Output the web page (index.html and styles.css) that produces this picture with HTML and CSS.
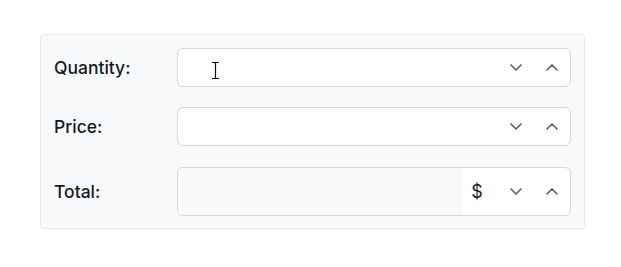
FILE: index.html
```html
<!DOCTYPE html>
<html lang="en">
<head>
    <meta charset="UTF-8">
    <meta name="viewport" content="width=device-width, initial-scale=1.0">
    <title>Order Total</title>
    <link rel="stylesheet" href="styles.css">
</head>
<body>

    <div class="panel">
        <div class="row">
            <label for="quantity">Quantity:</label>
            <div class="field">
                <input type="text" id="quantity">
                <button type="button" class="spin"><svg viewBox="0 0 12 7"><path d="M1 1l5 5 5-5"/></svg></button>
                <button type="button" class="spin"><svg viewBox="0 0 12 7"><path d="M1 6l5-5 5 5"/></svg></button>
                <svg class="ibeam" viewBox="0 0 9 17"><path d="M1 0.5h2.5q1 0 1 1v14q0 1 1 1h2.5M8 0.5h-2.5q-1 0-1 1M1 16.5h2.5q1 0 1-1"/></svg>
            </div>
        </div>

        <div class="row">
            <label for="price">Price:</label>
            <div class="field">
                <input type="text" id="price">
                <button type="button" class="spin"><svg viewBox="0 0 12 7"><path d="M1 1l5 5 5-5"/></svg></button>
                <button type="button" class="spin"><svg viewBox="0 0 12 7"><path d="M1 6l5-5 5 5"/></svg></button>
            </div>
        </div>

        <div class="row">
            <label for="total">Total:</label>
            <div class="field tall">
                <input type="text" id="total" disabled>
                <span class="addon">$</span>
                <button type="button" class="spin"><svg viewBox="0 0 12 7"><path d="M1 1l5 5 5-5"/></svg></button>
                <button type="button" class="spin"><svg viewBox="0 0 12 7"><path d="M1 6l5-5 5 5"/></svg></button>
            </div>
        </div>
    </div>

</body>
</html>
```

FILE: styles.css
```css
body {
    font-family: 'Inter', 'Noto Sans', sans-serif;
    background-color: #fff;
    margin: 0;
    padding: 34px 36px 0 40px;
}
.panel {
    width: 517px;
    background-color: #f8f9fa;
    border: 1px solid #e6e8eb;
    border-radius: 4px;
    padding: 13px 13px 12px 13px;
    display: flex;
    flex-direction: column;
    gap: 20px;
}
.row {
    display: flex;
    align-items: center;
}
.row:last-child {
    margin-top: 1px;
}
label {
    width: 123px;
    font-size: 17.5px;
    font-weight: 500;
    color: #151b26;
}
.field {
    position: relative;
    flex: 1;
    display: flex;
    align-items: center;
    height: 37px;
    background-color: #fff;
    border: 1px solid #d3d6db;
    border-radius: 6px;
    overflow: hidden;
}
.field.tall {
    height: 47px;
}
input {
    flex: 1;
    min-width: 0;
    height: 100%;
    border: none;
    padding: 0 12px;
    font-size: 16px;
    font-family: inherit;
    background: transparent;
    outline: none;
}
input:disabled {
    background-color: #f8f9fa;
}
.addon {
    width: 30px;
    padding-right: 6px;
    text-align: center;
    font-size: 18px;
    color: #151b26;
}
.spin {
    width: 36px;
    height: 100%;
    border: none;
    background: transparent;
    padding: 0;
    display: flex;
    align-items: center;
    justify-content: center;
    cursor: pointer;
}
.spin svg {
    width: 12px;
    height: 7px;
    fill: none;
    stroke: #5f6570;
    stroke-width: 1.7;
    stroke-linecap: round;
    stroke-linejoin: round;
}
.ibeam {
    position: absolute;
    left: 33px;
    top: 13px;
    width: 9px;
    height: 17px;
    fill: none;
    stroke: #111;
    stroke-width: 1.2;
}
```
